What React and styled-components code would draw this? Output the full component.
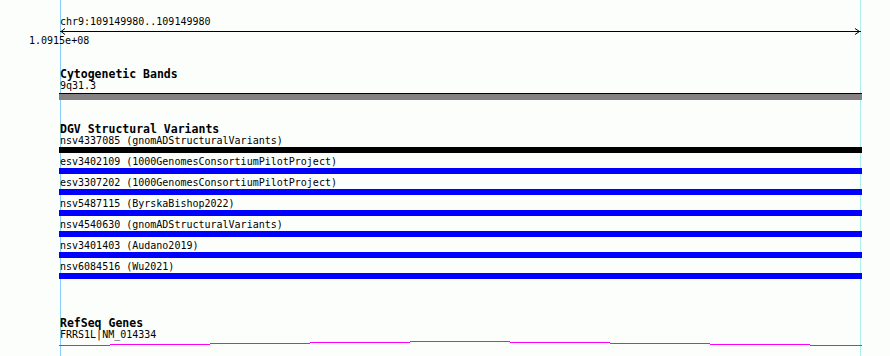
import React from "react";
import styled, { createGlobalStyle } from "styled-components";

const GlobalStyle = createGlobalStyle`
  html, body {
    margin: 0;
    padding: 0;
    background: #fcfefc;
  }
  body {
    font-family: "DejaVu Sans Mono", "Liberation Mono", monospace;
    color: #000;
  }
`;

const Page = styled.div`
  box-sizing: content-box;
  margin-left: 60px;
  width: 799px;
  min-height: 100vh;
  border-left: 1px solid #87cefa;
  border-right: 1px solid #afeeee;
  display: flex;
  flex-direction: column;
`;

const Location = styled.div`
  margin: 16px 0 0 -1px;
  font-size: 10px;
  line-height: 12px;
  white-space: pre;
`;

const RulerSvg = styled.svg`
  display: block;
  margin-left: -1px;
  width: 801px;
  height: 7px;
  overflow: visible;
`;

const ScaleLabel = styled.div`
  margin-left: -32px;
  width: 60px;
  font-size: 10px;
  line-height: 12px;
  white-space: pre;
`;

const Track = styled.section`
  display: flex;
  flex-direction: column;
  margin-top: ${(p) => p.$top}px;
`;

const TrackTitle = styled.div`
  margin-left: -1px;
  padding-top: 1px;
  font-size: 11.5px;
  font-weight: bold;
  line-height: 12px;
  white-space: pre;
`;

const FeatureLabel = styled.div`
  margin-left: -1px;
  font-size: 10px;
  line-height: ${(p) => p.$lh || 11}px;
  white-space: pre;
`;

const Band = styled.div`
  margin: ${(p) => p.$gap || 1}px -2px 0 -2px;
  height: 6px;
  background: ${(p) => p.$color};
  border-top: ${(p) => (p.$outline ? "1px solid #000" : "none")};
`;

const Feature = styled.div`
  display: flex;
  flex-direction: column;
  margin-bottom: 3px;
`;

const GeneSvg = styled.svg`
  display: block;
  margin-left: -2px;
  width: 803px;
  height: 6px;
`;

const variants = [
  { id: "nsv4337085", src: "gnomADStructuralVariants", color: "#000000" },
  { id: "esv3402109", src: "1000GenomesConsortiumPilotProject", color: "#0000ff" },
  { id: "esv3307202", src: "1000GenomesConsortiumPilotProject", color: "#0000ff" },
  { id: "nsv5487115", src: "ByrskaBishop2022", color: "#0000ff" },
  { id: "nsv4540630", src: "gnomADStructuralVariants", color: "#0000ff" },
  { id: "nsv3401403", src: "Audano2019", color: "#0000ff" },
  { id: "nsv6084516", src: "Wu2021", color: "#0000ff" },
];

// gene line steps: [x0, x1, row] relative to svg (svg x=0 is page x=59, row 0 is y=341)
const geneSteps = [
  [0, 51, 4],
  [51, 151, 3],
  [151, 251, 2],
  [251, 351, 1],
  [351, 451, 0],
  [451, 551, 1],
  [551, 651, 2],
  [651, 751, 3],
  [751, 803, 4],
];

function Ruler() {
  return (
    <RulerSvg viewBox="0 0 801 7" shapeRendering="crispEdges">
      <line x1="0" y1="3.5" x2="801" y2="3.5" stroke="#000" strokeWidth="1" />
      <polyline
        points="5,0.5 1,3.5 5,6.5"
        fill="none"
        stroke="#000"
        strokeWidth="1"
        shapeRendering="auto"
      />
      <polyline
        points="795,0.5 799.5,3.5 795,6.5"
        fill="none"
        stroke="#000"
        strokeWidth="1"
        shapeRendering="auto"
      />
    </RulerSvg>
  );
}

function GeneLine() {
  return (
    <GeneSvg viewBox="0 0 803 6" shapeRendering="crispEdges">
      {geneSteps.map(([a, b, r], i) => (
        <line key={i} x1={a} y1={r + 0.5} x2={b} y2={r + 0.5} stroke="#ff00ff" strokeWidth="1" />
      ))}
    </GeneSvg>
  );
}

export default function App() {
  return (
    <>
      <GlobalStyle />
      <Page>
        <Location>chr9:109149980..109149980</Location>
        <Ruler />
        <ScaleLabel>1.0915e+08</ScaleLabel>

        <Track $top={20}>
          <TrackTitle>Cytogenetic Bands</TrackTitle>
          <FeatureLabel $lh={12}>9q31.3</FeatureLabel>
          <Band $color="#848084" $outline $gap={1} />
        </Track>

        <Track $top={22}>
          <TrackTitle>DGV Structural Variants</TrackTitle>
          {variants.map((v) => (
            <Feature key={v.id}>
              <FeatureLabel>{`${v.id} (${v.src})`}</FeatureLabel>
              <Band $color={v.color} />
            </Feature>
          ))}
        </Track>

        <Track $top={34}>
          <TrackTitle>RefSeq Genes</TrackTitle>
          <FeatureLabel $lh={12}>FRRS1L|NM_014334</FeatureLabel>
          <GeneLine />
        </Track>
      </Page>
    </>
  );
}
